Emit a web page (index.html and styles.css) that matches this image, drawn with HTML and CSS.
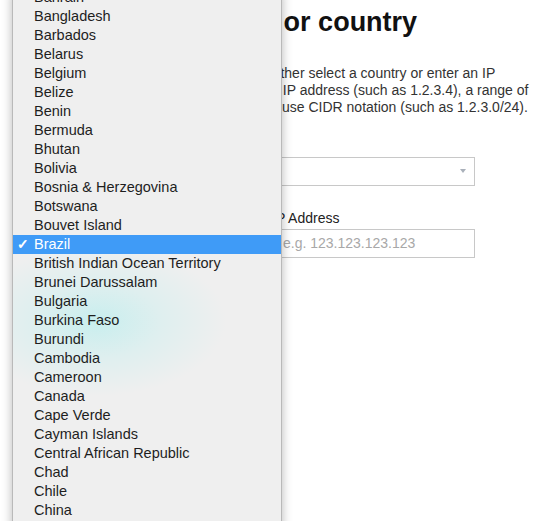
FILE: index.html
```html
<!DOCTYPE html>
<html lang="en">
<head>
<meta charset="utf-8">
<title>Block by IP address or country</title>
<link rel="stylesheet" href="styles.css">
</head>
<body>
<main class="page">
  <h1 class="title">Block by IP address or country</h1>
  <div class="column">
    <p class="intro">Either select a country or enter an IP<br>in IP address (such as 1.2.3.4), a range of<br>is use CIDR notation (such as 1.2.3.0/24).</p>
    <div class="select-box" aria-label="Country"><span class="select-arrow"></span></div>
    <label class="field-label">IP Address</label>
    <div class="text-input">e.g. 123.123.123.123</div>
  </div>
</main>

<ul class="menu">
  <li class="item">Bahrain</li>
  <li class="item">Bangladesh</li>
  <li class="item">Barbados</li>
  <li class="item">Belarus</li>
  <li class="item">Belgium</li>
  <li class="item">Belize</li>
  <li class="item">Benin</li>
  <li class="item">Bermuda</li>
  <li class="item">Bhutan</li>
  <li class="item">Bolivia</li>
  <li class="item">Bosnia &amp; Herzegovina</li>
  <li class="item">Botswana</li>
  <li class="item">Bouvet Island</li>
  <li class="item selected"><span class="check">✓</span>Brazil</li>
  <li class="item">British Indian Ocean Territory</li>
  <li class="item">Brunei Darussalam</li>
  <li class="item">Bulgaria</li>
  <li class="item">Burkina Faso</li>
  <li class="item">Burundi</li>
  <li class="item">Cambodia</li>
  <li class="item">Cameroon</li>
  <li class="item">Canada</li>
  <li class="item">Cape Verde</li>
  <li class="item">Cayman Islands</li>
  <li class="item">Central African Republic</li>
  <li class="item">Chad</li>
  <li class="item">Chile</li>
  <li class="item">China</li>
  <li class="item">Christmas Island</li>
</ul>
</body>
</html>
```
FILE: styles.css
```css
html, body {
  margin: 0;
  padding: 0;
  background: #ffffff;
  overflow: hidden;
}
body {
  width: 539px;
  height: 521px;
  position: relative;
  font-family: "Liberation Sans", Arial, sans-serif;
  color: #222;
}
.page {
  padding-top: 4px;
}
.title {
  margin: 0 0 0 20px;
  font-size: 27px;
  font-weight: bold;
  line-height: 36px;
  color: #111;
  white-space: nowrap;
}
.column {
  margin-left: 268px;
  width: 207px;
}
.intro {
  margin: 25px 0 0;
  font-size: 14px;
  line-height: 17px;
  color: #333;
  white-space: nowrap;
}
.select-box {
  margin-top: 41px;
  margin-left: 4px;
  height: 27px;
  border: 1px solid #c8c8c8;
  position: relative;
  background: #fff;
}
.select-arrow {
  position: absolute;
  right: 8px;
  top: 11px;
  width: 0;
  height: 0;
  border-left: 3.5px solid transparent;
  border-right: 3.5px solid transparent;
  border-top: 4px solid #a9b0ba;
}
.field-label {
  display: block;
  margin: 24px 0 3px 4px;
  font-size: 14px;
  line-height: 16px;
  color: #222;
}
.text-input {
  margin-left: 4px;
  height: 27px;
  border: 1px solid #c8c8c8;
  font-size: 14px;
  line-height: 27px;
  padding-left: 10px;
  color: #a8a8a8;
  white-space: nowrap;
}
.menu {
  position: absolute;
  left: 12px;
  top: -13px;
  width: 268px;
  margin: 0;
  padding: 0;
  list-style: none;
  border: 1px solid #b9b9b9;
  background:
    radial-gradient(ellipse 130px 75px at 83px 333px, rgba(200, 238, 238, 1), rgba(212, 239, 239, 0.6) 50%, rgba(239, 239, 239, 0) 100%),
    #efefef;
  box-shadow: 0 4px 10px rgba(0, 0, 0, 0.28);
  font-size: 14.5px;
  color: #1e1e1e;
}
.item {
  height: 19px;
  line-height: 19px;
  padding-left: 21px;
  position: relative;
  white-space: nowrap;
}
.item.selected {
  background: #3f9bf7;
  color: #fff;
}
.check {
  position: absolute;
  left: 4px;
  top: 0;
  font-size: 14px;
  font-weight: bold;
}
```
